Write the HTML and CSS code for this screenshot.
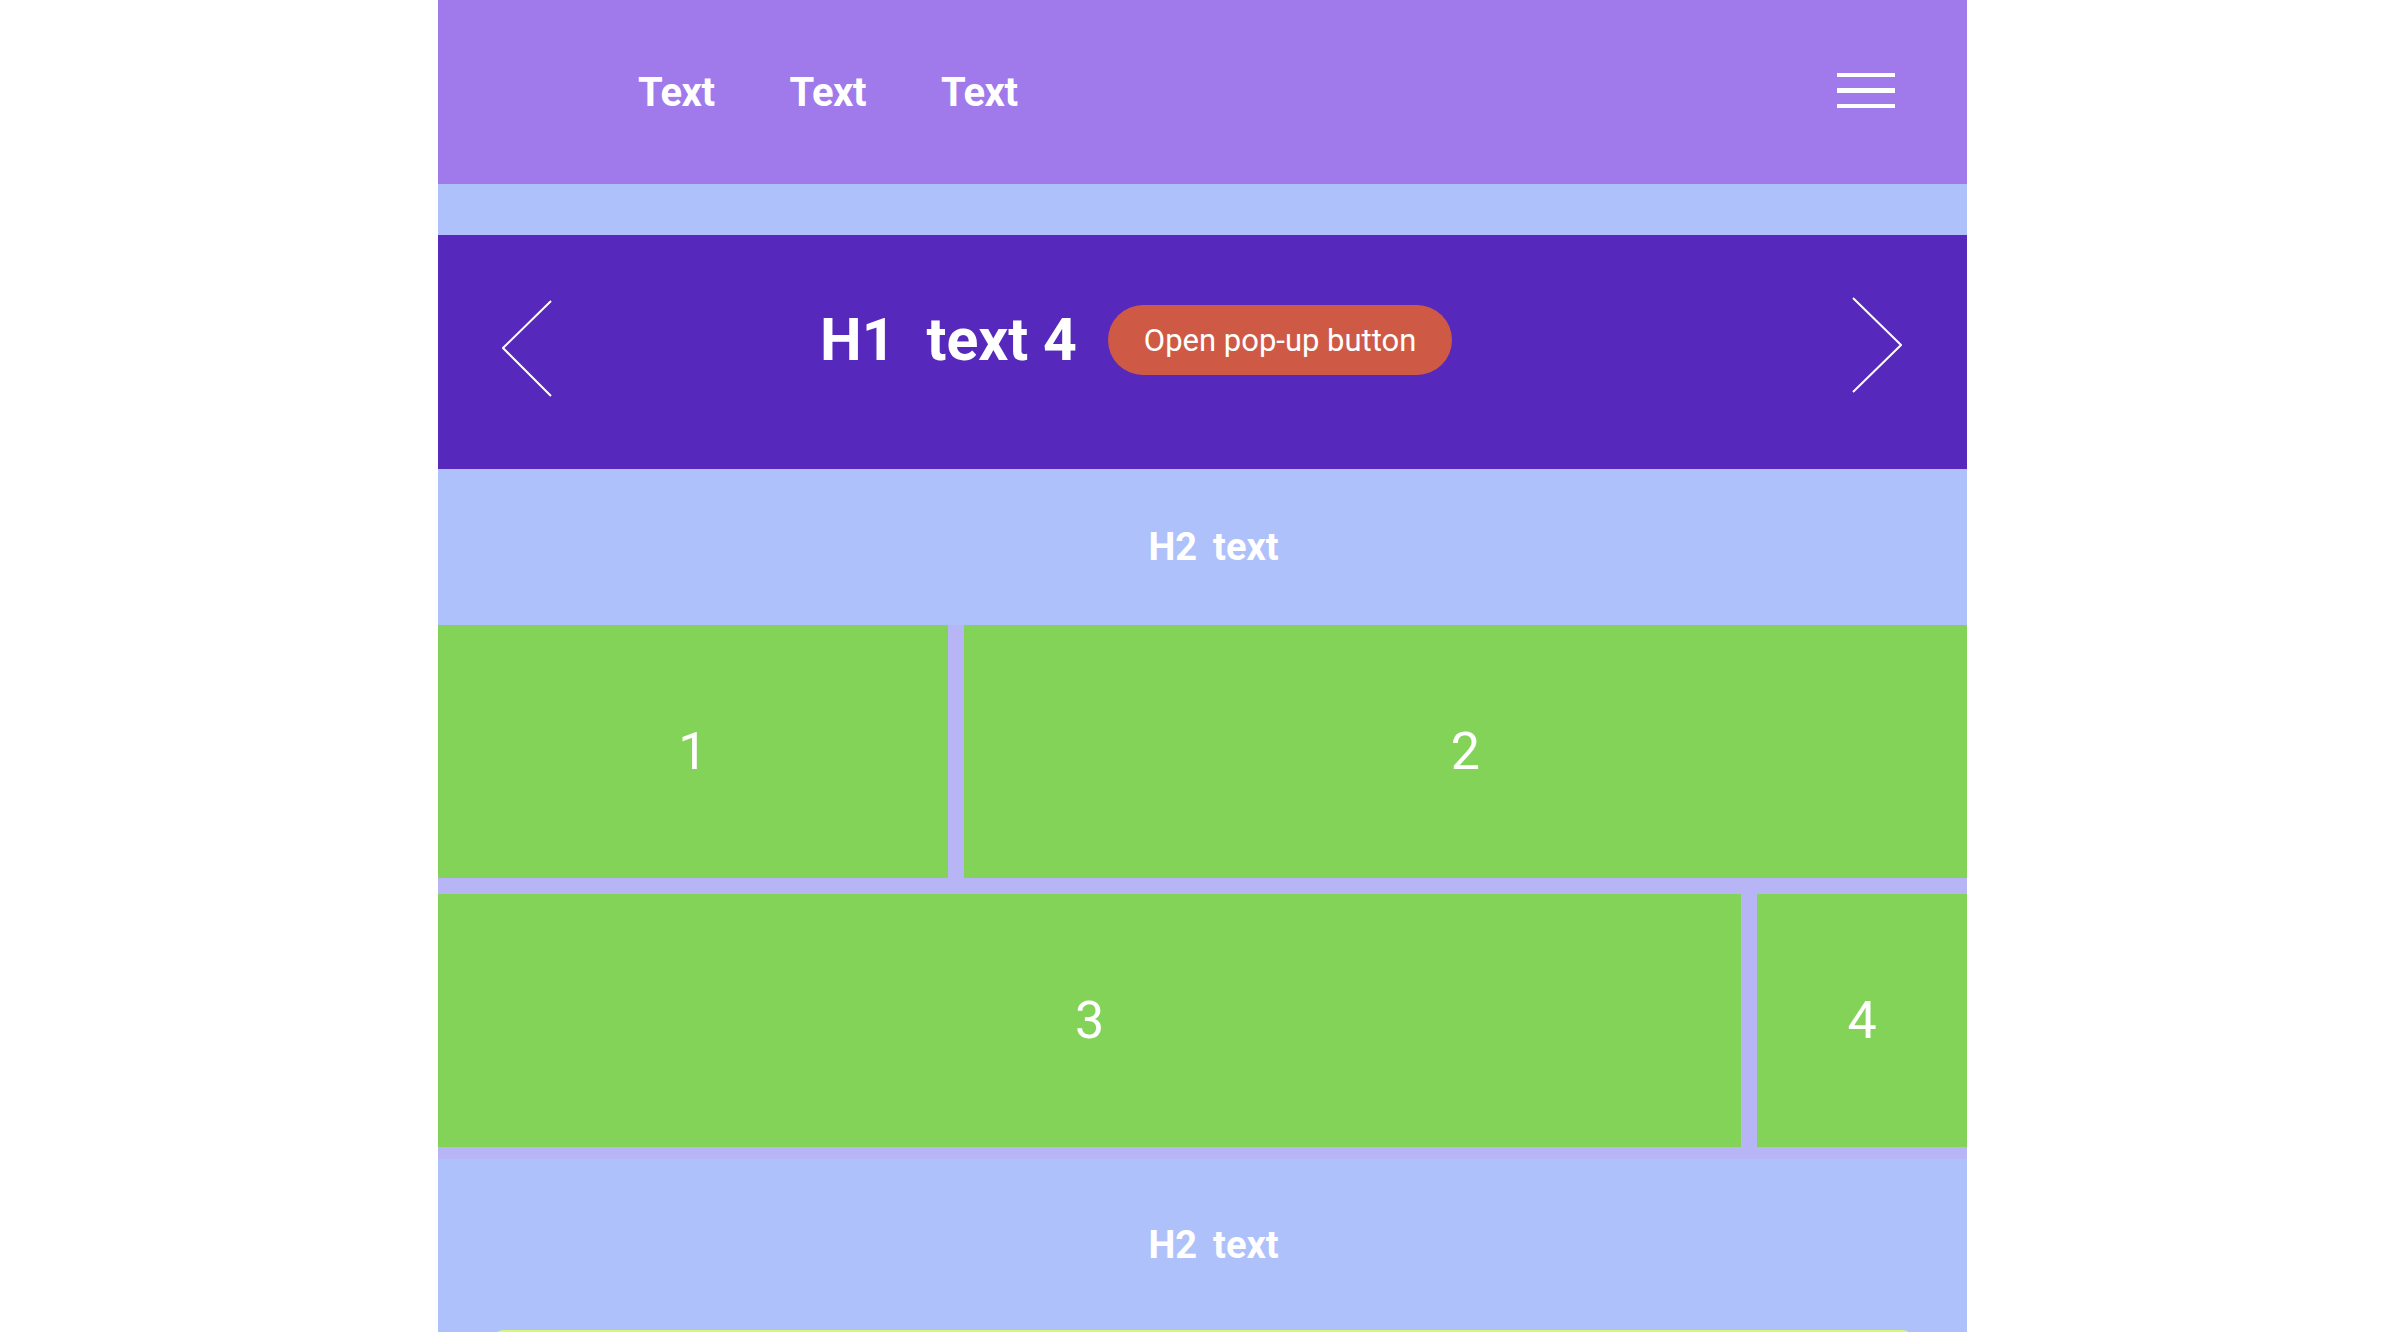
FILE: index.html
```html
<!DOCTYPE html>
<html lang="en">
<head>
<meta charset="utf-8">
<title>Layout</title>
<link rel="stylesheet" href="styles.css">
</head>
<body>
<div class="page">
  <header class="header">
    <nav class="nav">
      <a class="nav-link">Text</a>
      <a class="nav-link">Text</a>
      <a class="nav-link">Text</a>
    </nav>
    <svg class="burger" width="58" height="36" viewBox="0 0 58 36" aria-hidden="true">
      <rect x="0" y="0" width="58" height="4" fill="#fff"/>
      <rect x="0" y="15" width="58" height="5" fill="#fff"/>
      <rect x="0" y="31" width="58" height="4" fill="#fff"/>
    </svg>
  </header>
  <div class="spacer"></div>
  <section class="hero">
    <svg class="arrow arrow-left" width="50" height="98" viewBox="0 0 50 98" aria-hidden="true">
      <polyline points="49,1 1,48 49,96" fill="none" stroke="#fff" stroke-width="2"/>
    </svg>
    <div class="hero-content">
      <h1 class="hero-title"><span>H1</span><span>text 4</span></h1>
      <button class="popup-btn">Open pop-up button</button>
    </div>
    <svg class="arrow arrow-right" width="50" height="98" viewBox="0 0 50 98" aria-hidden="true">
      <polyline points="1,1 49,48 1,95" fill="none" stroke="#fff" stroke-width="2"/>
    </svg>
  </section>
  <section class="band band-first">
    <h2 class="band-title"><span>H2</span><span>text</span></h2>
  </section>
  <section class="tiles">
    <div class="row">
      <div class="tile t1">1</div>
      <div class="tile t2">2</div>
    </div>
    <div class="row">
      <div class="tile t3">3</div>
      <div class="tile t4">4</div>
    </div>
  </section>
  <section class="band band-second">
    <h2 class="band-title"><span>H2</span><span>text</span></h2>
  </section>
  <div class="card"></div>
</div>
</body>
</html>
```
FILE: styles.css
```css
html, body {
  margin: 0;
  padding: 0;
  overflow: hidden;
  background: #ffffff;
}

body {
  display: flex;
  justify-content: center;
  padding-left: 10px;
  font-family: Roboto, "Liberation Sans", sans-serif;
  color: #ffffff;
}

.page {
  width: 1529px;
  background: #afc1fa;
  display: flex;
  flex-direction: column;
}

.header {
  height: 184px;
  background: #a07aeb;
  display: flex;
  align-items: center;
  padding: 0 72px 0 200px;
  box-sizing: border-box;
}

.nav {
  display: flex;
  gap: 75px;
  flex: 1;
}

.nav-link {
  font-size: 40px;
  font-weight: 700;
  color: #ffffff;
  letter-spacing: -0.5px;
}

.burger {
  display: block;
  margin-top: -2px;
}

.spacer {
  height: 51px;
}

.hero {
  height: 234px;
  background: #5628bb;
  display: flex;
  align-items: center;
  padding: 0 65px 24px 64px;
  box-sizing: border-box;
}

.arrow {
  display: block;
  flex: none;
}

.arrow-left {
  margin-top: 17px;
}

.arrow-right {
  margin-top: 11px;
  margin-left: auto;
}

.hero-content {
  display: flex;
  align-items: center;
  margin-left: 268px;
}

.hero-title {
  margin: 0;
  font-size: 59px;
  font-weight: 700;
  display: flex;
  gap: 31px;
  line-height: 70px;
}

.popup-btn {
  margin-left: 31px;
  height: 70px;
  padding: 0 36px;
  border: none;
  border-radius: 35px;
  background: #ce5a45;
  color: #ffffff;
  font-family: Roboto, "Liberation Sans", sans-serif;
  font-size: 31px;
  font-weight: 400;
}

.band {
  box-sizing: border-box;
  display: flex;
  justify-content: center;
}

.band-first {
  height: 156px;
  padding-top: 57px;
}

.band-second {
  height: 171px;
  padding-top: 65px;
}

.band-title {
  margin: 0 0 0 22px;
  font-size: 38px;
  font-weight: 700;
  line-height: 42px;
  display: flex;
  gap: 16px;
  height: 42px;
}

.tiles {
  background: #b8b5f6;
  display: flex;
  flex-direction: column;
  gap: 16px;
  padding-bottom: 12px;
}

.row {
  display: flex;
  gap: 16px;
  height: 253px;
}

.tile {
  background: #84d359;
  display: flex;
  align-items: center;
  justify-content: center;
  font-size: 52px;
  font-weight: 400;
}

.t1 {
  width: 33.333%;
  flex: none;
}

.t2 {
  flex: 1;
}

.t3 {
  width: 85.22%;
  flex: none;
}

.t4 {
  flex: 1;
}

.card {
  height: 60px;
  margin: 0 54px 0 55px;
  background: #d7f67b;
  border-radius: 10px 10px 0 0;
}
```
